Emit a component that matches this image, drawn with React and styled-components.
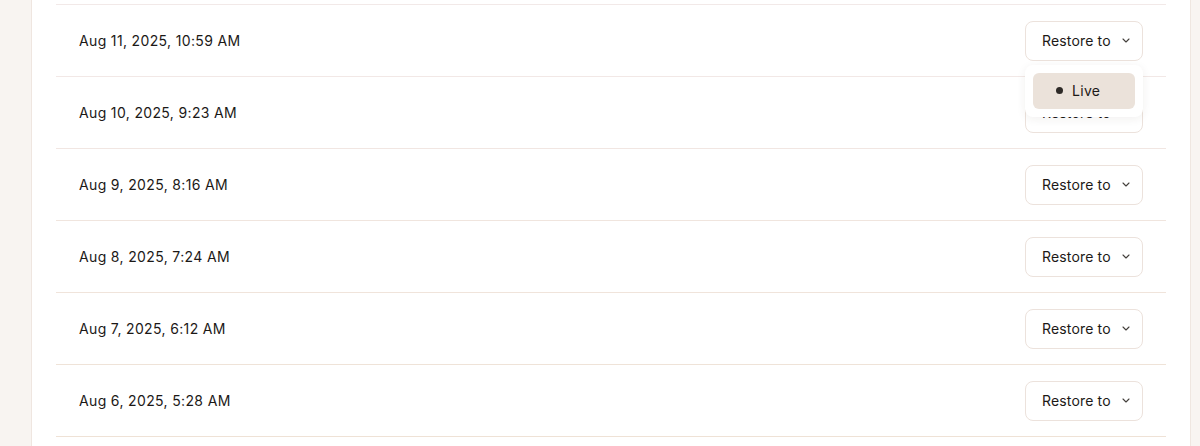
import React from "react";
import styled, { createGlobalStyle } from "styled-components";

const GlobalStyle = createGlobalStyle`
  html, body {
    margin: 0;
    padding: 0;
    background: #ffffff;
    font-family: Inter, "Liberation Sans", sans-serif;
    color: #1c1917;
    -webkit-font-smoothing: antialiased;
  }
`;

const Page = styled.div`
  display: flex;
  height: 446px;
  overflow: hidden;
`;

const Gutter = styled.div`
  flex: 0 0 ${(p) => p.$w}px;
  background: #f8f4f1;
  border-${(p) => p.$side}: 1px solid #efe6e0;
`;

const Main = styled.main`
  flex: 1;
  background: #fff;
  padding: 4px 24px 0;
`;

const List = styled.ul`
  list-style: none;
  margin: 0;
  padding: 0;
`;

const Row = styled.li`
  position: relative;
  display: flex;
  align-items: center;
  justify-content: space-between;
  height: 71px;
  padding: 0 23px 0 23px;
  border-top: 1px solid ${(p) => p.$line};
`;

const Stamp = styled.span`
  font-size: 14px;
  letter-spacing: 0.35px;
  color: #1c1917;
  white-space: nowrap;
`;

const ButtonWrap = styled.div`
  position: relative;
  flex-shrink: 0;
`;

const RestoreButton = styled.button`
  display: flex;
  align-items: center;
  gap: 11px;
  height: 40px;
  width: 118px;
  box-sizing: border-box;
  padding: 0 14px 0 16px;
  background: #fff;
  border: 1px solid #ece2dc;
  border-radius: 8px;
  font-family: inherit;
  font-size: 14px;
  font-weight: 400;
  letter-spacing: 0.15px;
  white-space: nowrap;
  color: #1c1917;
  cursor: pointer;

  svg {
    flex-shrink: 0;
  }
`;

const Menu = styled.div`
  position: absolute;
  top: 44px;
  left: 0;
  z-index: 2;
  width: 118px;
  box-sizing: border-box;
  padding: 8px;
  background: #fff;
  border-radius: 8px;
  box-shadow: 0 2px 10px rgba(60, 40, 30, 0.07);
`;

const MenuItem = styled.div`
  display: flex;
  align-items: center;
  gap: 9px;
  height: 36px;
  padding-left: 23px;
  border-radius: 6px;
  background: #ebe2da;
  font-size: 14px;
  letter-spacing: 0.3px;
  color: #1c1917;
`;

const Dot = styled.span`
  width: 7px;
  height: 7px;
  border-radius: 50%;
  background: #2e2a27;
`;

const Chevron = () => (
  <svg width="8" height="5" viewBox="0 0 8 5" fill="none">
    <path d="M1 1l3 3 3-3" stroke="#44403c" strokeWidth="1.1" strokeLinecap="round" strokeLinejoin="round" />
  </svg>
);

const versions = [
  "Aug 11, 2025, 10:59 AM",
  "Aug 10, 2025, 9:23 AM",
  "Aug 9, 2025, 8:16 AM",
  "Aug 8, 2025, 7:24 AM",
  "Aug 7, 2025, 6:12 AM",
  "Aug 6, 2025, 5:28 AM",
];

const lines = ["#f2e9e8", "#f2e8e6", "#f1e6e2", "#f0e5de", "#f0e4db", "#efe3d8", "#efe2d6"];

export default function App() {
  return (
    <>
      <GlobalStyle />
      <Page>
        <Gutter $w={31} $side="right" />
        <Main>
          <List>
            {versions.map((v, i) => (
              <Row key={v} $line={lines[i]}>
                <Stamp>{v}</Stamp>
                <ButtonWrap>
                  <RestoreButton>
                    Restore to <Chevron />
                  </RestoreButton>
                  {i === 0 && (
                    <Menu>
                      <MenuItem>
                        <Dot />
                        Live
                      </MenuItem>
                    </Menu>
                  )}
                </ButtonWrap>
              </Row>
            ))}
            <Row $line={lines[6]} />
          </List>
        </Main>
        <Gutter $w={9} $side="left" />
      </Page>
    </>
  );
}
